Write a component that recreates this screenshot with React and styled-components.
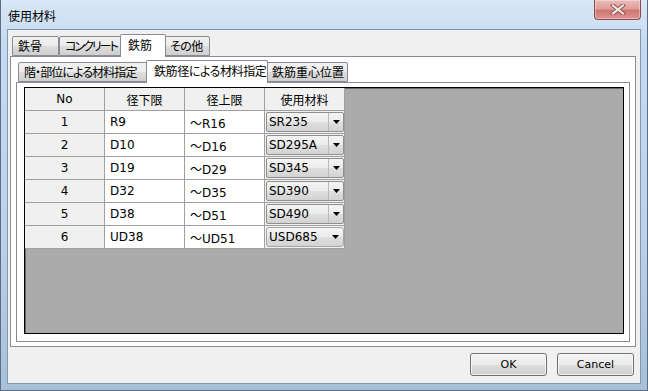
import React from "react";
import styled, { createGlobalStyle } from "styled-components";

const GlobalStyle = createGlobalStyle`
  html, body {
    margin: 0;
    padding: 0;
    background: #fff;
  }
  body {
    font-family: "DejaVu Sans", "Noto Sans CJK JP", sans-serif;
    font-size: 12px;
    color: #000;
  }
  * {
    box-sizing: border-box;
  }
`;

const Window = styled.div`
  width: 648px;
  height: 391px;
  display: flex;
  flex-direction: column;
  padding: 0 6px 6px 6px;
  border: 1px solid #5b6e86;
  border-top: none;
  background: linear-gradient(180deg, #d9e7f6 0%, #c5daf0 12%, #bcd2ea 60%, #a8bfd9 100%);
`;

const TitleBar = styled.div`
  height: 29px;
  display: flex;
  justify-content: space-between;
  align-items: flex-start;
`;

const TitleText = styled.div`
  margin: 9px 0 0 1px;
  line-height: 14px;
  font-family: "Noto Sans CJK JP", sans-serif;
  font-size: 12px;
`;

const CloseButton = styled.div`
  width: 47px;
  height: 20px;
  display: flex;
  align-items: center;
  justify-content: center;
  border: 1px solid #8a4b4a;
  border-top: none;
  border-radius: 0 0 4px 4px;
  background: linear-gradient(180deg, #ecbcb8 0%, #dea09b 45%, #cf7570 55%, #dc9590 100%);
  box-shadow: inset 0 0 0 1px rgba(255, 255, 255, 0.35);
`;

const Client = styled.div`
  flex: 1;
  display: flex;
  flex-direction: column;
  padding: 4px 4px 7px 2px;
  border: 1px solid #8497b0;
  background: #f0f0f0;
`;

const TabControl = styled.div`
  flex: 1;
  display: flex;
  flex-direction: column;
`;

const TabStrip = styled.div`
  height: 22px;
  display: flex;
  align-items: flex-end;
  padding-left: 2px;
`;

const Tab = styled.div`
  position: relative;
  flex: none;
  width: ${(p) => p.$w}px;
  height: ${(p) => (p.$active ? 23 : 20)}px;
  margin: ${(p) => (p.$active ? "0 -2px -1px -2px" : "0")};
  z-index: ${(p) => (p.$active ? 2 : 1)};
  display: flex;
  align-items: ${(p) => (p.$active ? "flex-start" : "center")};
  padding: ${(p) => (p.$active ? "3px 0 0 7px" : "0 0 0 5px")};
  border: 1px solid #898c95;
  border-bottom: ${(p) => (p.$active ? "none" : "1px solid #898c95")};
  border-radius: 2px 2px 0 0;
  background: ${(p) =>
    p.$active
      ? "#fff"
      : "linear-gradient(180deg, #f2f2f2 0%, #ebebeb 50%, #dddddd 51%, #cfcfcf 100%)"};
  font-family: "Noto Sans CJK JP", sans-serif;
  font-feature-settings: "palt";
  font-size: 12px;
  line-height: 14px;
  letter-spacing: ${(p) => p.$ls || 0}px;
  white-space: nowrap;
`;

const Panel = styled.div`
  flex: 1;
  display: flex;
  flex-direction: column;
  border: 1px solid #898c95;
  background: #fff;
  padding: ${(p) => p.$pad};
`;

const Grid = styled.div`
  flex: 1;
  border: 1px solid #000;
  box-shadow: inset 1px 1px 0 #696969;
  background: #ababab;
  overflow: hidden;
`;

const Row = styled.div`
  display: grid;
  grid-template-columns: 80px 80px 80px 80px;
  height: 23px;
`;

const Cell = styled.div`
  display: flex;
  align-items: center;
  justify-content: ${(p) => (p.$center ? "center" : "flex-start")};
  padding: ${(p) => (p.$center ? "0" : "0 0 0 5px")};
  border-right: 1px solid #a0a0a0;
  border-bottom: 1px solid #a0a0a0;
  background: ${(p) => (p.$fixed ? "#f0f0f0" : "#fff")};
  font-family: ${(p) =>
    p.$jp ? '"Noto Sans CJK JP", sans-serif' : '"DejaVu Sans", "Noto Sans CJK JP", sans-serif'};
  font-feature-settings: "palt";
  font-size: 12px;
  white-space: nowrap;
`;

const ComboCell = styled.div`
  display: flex;
  padding: 1px 0 1px 1px;
  border-right: 1px solid #a0a0a0;
  border-bottom: 1px solid #a0a0a0;
  background: #f0f0f0;
`;

const Combo = styled.div`
  flex: 1;
  display: flex;
  align-items: stretch;
  border: 1px solid ${(p) => (p.$plain ? "#a5a5a5" : "#8e8f8f")};
  border-radius: ${(p) => (p.$plain ? "3px" : "2px")};
  background: linear-gradient(180deg, #f4f4f4 0%, #ececec 50%, #dfdfdf 51%, #d3d3d3 100%);
`;

const ComboText = styled.div`
  flex: 1;
  display: flex;
  align-items: center;
  padding-left: 2px;
  font-family: "DejaVu Sans", sans-serif;
  font-size: 12px;
`;

const ComboButton = styled.div`
  width: 15px;
  display: flex;
  align-items: center;
  justify-content: center;
  border-left: ${(p) => (p.$plain ? "none" : "1px solid #b9b9b9")};
`;

const ButtonRow = styled.div`
  display: flex;
  justify-content: flex-end;
  gap: 10px;
  margin-top: 6px;
  padding-right: 2px;
`;

const Button = styled.div`
  width: 77px;
  height: 23px;
  display: flex;
  align-items: center;
  justify-content: center;
  border: 1px solid #707070;
  border-radius: 3px;
  background: linear-gradient(180deg, #f2f2f2 0%, #ebebeb 50%, #dddddd 51%, #cfcfcf 100%);
  box-shadow: inset 0 0 0 1px rgba(255, 255, 255, 0.7);
  font-family: "DejaVu Sans", sans-serif;
  font-size: 11px;
`;

const Arrow = () => (
  <svg width="7" height="4" viewBox="0 0 7 4">
    <path d="M0 0 H7 L3.5 4 Z" fill="#000" />
  </svg>
);

const CloseGlyph = () => (
  <svg width="16" height="11" viewBox="0 0 16 11">
    <path d="M3 1.5 L13 9.5 M13 1.5 L3 9.5" stroke="#8a4f4e" strokeWidth="4" strokeLinecap="square" />
    <path d="M3 1.5 L13 9.5 M13 1.5 L3 9.5" stroke="#f6e6e5" strokeWidth="2.2" strokeLinecap="square" />
  </svg>
);

const outerTabs = [
  { label: "鉄骨", w: 47 },
  { label: "コンクリート", w: 63, ls: -2 },
  { label: "鉄筋", w: 46, active: true },
  { label: "その他", w: 46, ls: -0.6 },
];

const innerTabs = [
  { label: "階・部位による材料指定", w: 130, ls: -0.9 },
  { label: "鉄筋径による材料指定", w: 122, active: true, ls: -0.4 },
  { label: "鉄筋重心位置", w: 82 },
];

const rows = [
  { no: 1, low: "R9", high: "～R16", mat: "SR235" },
  { no: 2, low: "D10", high: "～D16", mat: "SD295A" },
  { no: 3, low: "D19", high: "～D29", mat: "SD345" },
  { no: 4, low: "D32", high: "～D35", mat: "SD390" },
  { no: 5, low: "D38", high: "～D51", mat: "SD490" },
  { no: 6, low: "UD38", high: "～UD51", mat: "USD685", plain: true },
];

const App = () => {
  return (
    <>
      <GlobalStyle />
      <Window>
        <TitleBar>
          <TitleText>使用材料</TitleText>
          <CloseButton>
            <CloseGlyph />
          </CloseButton>
        </TitleBar>
        <Client>
          <TabControl>
            <TabStrip>
              {outerTabs.map((t) => (
                <Tab key={t.label} $w={t.w} $active={t.active} $ls={t.ls}>
                  {t.label}
                </Tab>
              ))}
            </TabStrip>
            <Panel $pad="3px 5px 4px 5px">
              <TabStrip>
                {innerTabs.map((t) => (
                  <Tab key={t.label} $w={t.w} $active={t.active} $ls={t.ls}>
                    {t.label}
                  </Tab>
                ))}
              </TabStrip>
              <Panel $pad="4px 5px 7px 7px">
                <Grid>
                  <Row>
                    <Cell $fixed $center>No</Cell>
                    <Cell $fixed $center $jp>径下限</Cell>
                    <Cell $fixed $center $jp>径上限</Cell>
                    <Cell $fixed $center $jp>使用材料</Cell>
                  </Row>
                  {rows.map((r) => (
                    <Row key={r.no}>
                      <Cell $fixed $center>{r.no}</Cell>
                      <Cell>{r.low}</Cell>
                      <Cell>{r.high}</Cell>
                      <ComboCell>
                        <Combo $plain={r.plain}>
                          <ComboText>{r.mat}</ComboText>
                          <ComboButton $plain={r.plain}>
                            <Arrow />
                          </ComboButton>
                        </Combo>
                      </ComboCell>
                    </Row>
                  ))}
                </Grid>
              </Panel>
            </Panel>
          </TabControl>
          <ButtonRow>
            <Button>OK</Button>
            <Button>Cancel</Button>
          </ButtonRow>
        </Client>
      </Window>
    </>
  );
};

export default App;
